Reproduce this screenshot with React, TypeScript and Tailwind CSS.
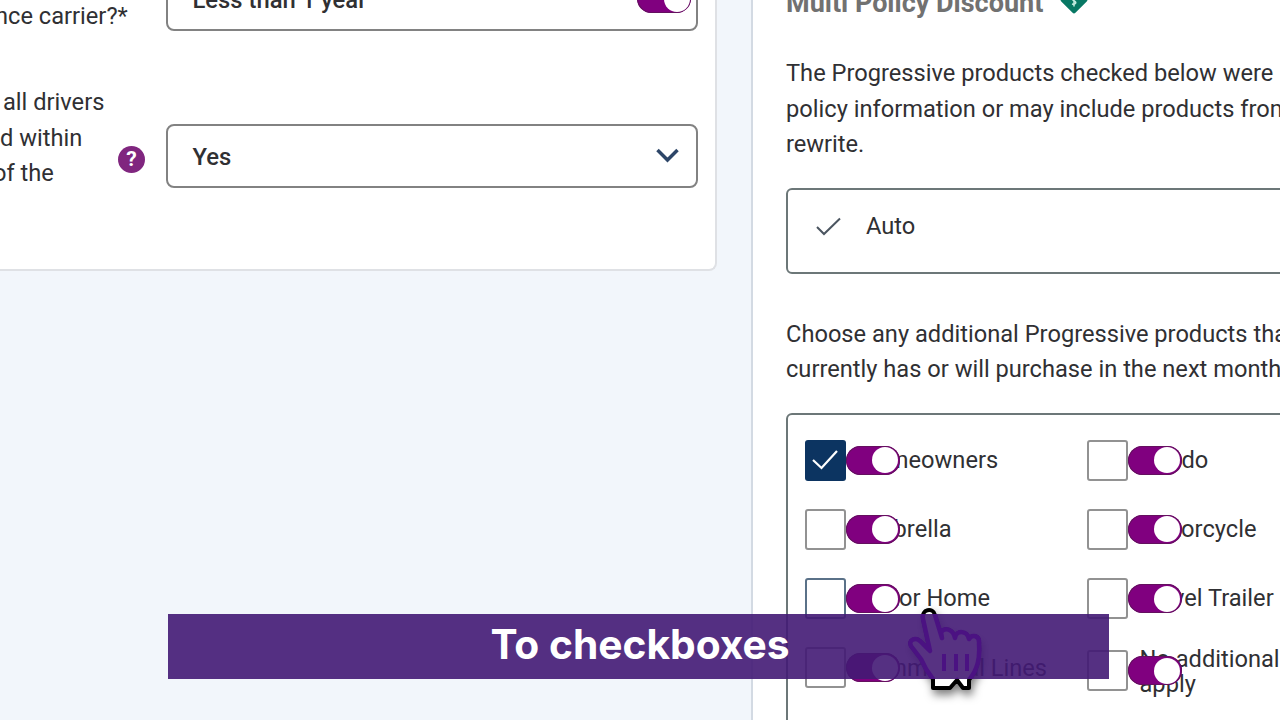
import React from "react";

function Toggle({ className = "" }: { className?: string }) {
  return (
    <span className={`flex h-[29px] w-[54px] shrink-0 items-center justify-end rounded-full bg-[#80007f] p-[1.5px] inset-ring inset-ring-[#64105f] ${className}`}>
      <span className="size-[26px] rounded-full bg-white" />
    </span>
  );
}

interface OptionProps {
  label: React.ReactNode;
  checked?: boolean;
  focus?: boolean;
  wrap?: boolean;
}

function Option({ label, checked, focus, wrap }: OptionProps) {
  return (
    <div className="relative flex h-[41px] items-center">
      <span
        className={`flex size-[41px] shrink-0 items-center justify-center rounded-[3px] ${
          checked ? "bg-[#0c3461]" : focus ? "border-2 border-[#5a7188]" : "border-2 border-[#929292]"
        }`}
      >
        {checked && (
          <svg className="-ml-[1px]" width="28" height="22" viewBox="0 0 28 22" fill="none" stroke="white" strokeWidth="2.2">
            <path d="M2 11 L10.500 19 L26 2" />
          </svg>
        )}
      </span>
      <span className={`ml-3 w-[240px] shrink-0 whitespace-nowrap text-[#303033] ${wrap ? "pt-[2px] leading-[24.500px]" : "pt-[1px]"}`}>{label}</span>
      <Toggle className="absolute left-[41px] top-[6px]" />
    </div>
  );
}

const HAND =
  "M37 88 V79 L30 69 L25 59 L15 46 C12 40 19 37 24 41 L34 51 L27 19 C25 9 37 7 39 15 L46 38 L45 32 C49 27 57 29 59 38 C60 30 71 30 73 39 C76 34 84 35 83 44 C84 58 82 69 73 80 V88 H67 L61 80 L54 88 Z";

export default function App() {
  return (
    <div className="relative flex h-[720px] w-[1280px] items-start overflow-hidden bg-[#f2f6fb] font-['Roboto',sans-serif] text-[23.65px] leading-[35.5px] text-[#303033]">
      <section className="h-[271px] w-[717px] shrink-0 overflow-hidden rounded-br-[8px] border-r-2 border-b-2 border-[#dfe1e5] bg-white">
        <div className="-mt-[34px] flex h-[65px] w-[698px] justify-between">
          <div className="-ml-[5px] mt-[33px] whitespace-nowrap">nce carrier?*</div>
          <div className="flex w-[532.500px] items-center justify-between rounded-[8px] border-2 border-[#828282] pr-[5px] pl-[25px] text-[23.800px] font-medium">
            <span className="pt-[4px]">Less than 1 year</span>
            <Toggle />
          </div>
        </div>
        <div className="mt-[54px] flex w-[698px] items-start">
          <div className="w-[118px] whitespace-nowrap">
            <div className="pl-[3px]">all drivers</div>
            <div>d within</div>
            <div className="-ml-[7px]">of the</div>
          </div>
          <div className="mt-[61px] flex size-[27px] items-center justify-center rounded-full bg-[#80267f] text-[21px] font-bold text-white">?</div>
          <div className="mt-[39px] ml-[20.500px] flex h-[64px] w-[532.500px] items-center justify-between rounded-[8px] border-2 border-[#828282] pr-[17px] pl-[25px] text-[23.800px] font-medium">
            <span className="pt-[3px]">Yes</span>
            <svg className="-mt-[1px]" width="23" height="15" viewBox="0 0 23 15" fill="none" stroke="#2d4668" strokeWidth="3.500">
              <path d="M1.500 2 L11.500 12 L21.500 2" />
            </svg>
          </div>
        </div>
      </section>

      <section className="ml-[34px] h-[720px] w-[529px] shrink-0 overflow-hidden border-l-2 border-[#d3dae3] bg-white pl-[33px]">
        <div className="-mt-[14px] flex h-[36px] items-center">
          <h2 className="w-[272px] text-[27px] font-bold whitespace-nowrap text-[#717171]">Multi Policy Discount</h2>
          <svg className="-mt-[9px]" width="32" height="32" viewBox="0 0 32 32">
            <rect x="6" y="6" width="20" height="20" rx="2" fill="#087864" transform="rotate(45 16 16)" />
            <path d="M18.500 14 C15 11 13 15 16 17 C19 18 18 21 14 20 M16 11 V22.500" fill="none" stroke="#c4ebe0" strokeWidth="1.500" />
          </svg>
        </div>
        <p className="mt-[34px] whitespace-nowrap">
          The Progressive products checked below were
          <br />
          policy information or may include products from
          <br />
          rewrite.
        </p>
        <div className="mt-[25px] flex h-[86px] w-[520px] items-start rounded-[6px] border-2 border-[#6c7778] pt-[19px] pl-[28px]">
          <svg className="mt-[8px]" width="25" height="20" viewBox="0 0 25 20" fill="none" stroke="#4b5560" strokeWidth="2">
            <path d="M1 10 L8 17 L24 1.500" />
          </svg>
          <span className="ml-[25px]">Auto</span>
        </div>
        <p className="mt-[43px] whitespace-nowrap">
          Choose any additional Progressive products that
          <br />
          currently has or will purchase in the next month
        </p>
        <div className="mt-[25px] grid h-[330px] w-[560px] grid-cols-[282px_270px] content-start gap-y-[28.300px] rounded-[6px] border-2 border-[#6c7778] pt-[25px] pl-[16.500px]">
          <Option label="Homeowners" checked />
          <Option label="Condo" />
          <Option label="Umbrella" />
          <Option label="Motorcycle" />
          <Option label="Motor Home" focus />
          <Option label="Travel Trailer" />
          <Option label="Commercial Lines" />
          <div className="pt-[3px]">
            <Option
              wrap
              label={
                <>
                  No additional products
                  <br />
                  apply
                </>
              }
            />
          </div>
        </div>
      </section>

      <svg className="absolute top-[600px] left-[896px] overflow-visible drop-shadow-[2px_5px_4px_rgba(0,0,0,0.5)]" width="100" height="100" viewBox="0 0 100 100">
        <path d={HAND} fill="white" stroke="black" strokeWidth="4" strokeLinejoin="round" />
      </svg>

      <div className="absolute top-[614px] left-[168px] flex h-[65px] w-[941px] items-center justify-center overflow-hidden bg-[#431a74]/90 pb-[3px] pl-[3px] font-['Inter',sans-serif] text-[40.700px] font-bold text-white">
        To checkboxes
        <svg className="absolute top-[-14px] left-[728px]" width="100" height="100" viewBox="0 0 100 100">
          <path d={HAND} fill="#573282" stroke="#4b1282" strokeWidth="4.500" strokeLinejoin="round" />
          <path d="M48 54 V71 M60 54 V71 M71 54 V71" stroke="#4b1282" strokeWidth="4" />
        </svg>
      </div>
    </div>
  );
}
